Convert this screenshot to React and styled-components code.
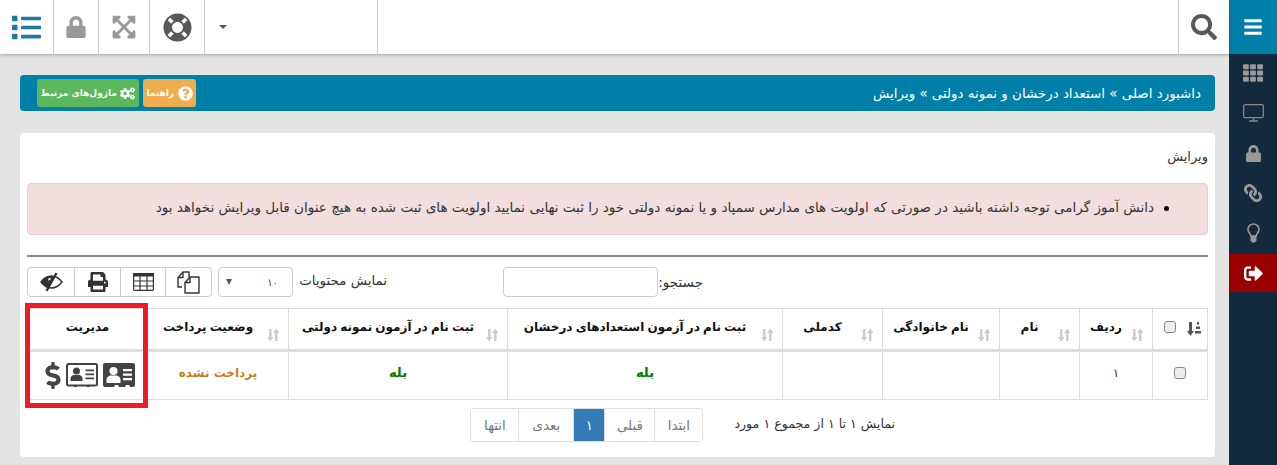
import styled, { createGlobalStyle } from 'styled-components';
import {
  FaBars, FaCogs, FaDollarSign, FaExpandArrowsAlt, FaLifeRing, FaLink, FaList, FaLock,
  FaPrint, FaQuestionCircle, FaSearch, FaSignOutAlt, FaTh,
} from 'react-icons/fa';

const GlobalStyle = createGlobalStyle`
  html, body {
    margin: 0;
    padding: 0;
    height: 100%;
    overflow: hidden;
    background: #e4e4e4;
  }
  body {
    font-family: "DejaVu Sans", sans-serif;
    font-size: 13px;
    color: #333;
  }
`;

const Page = styled.div`
  display: flex;
  direction: rtl;
  height: 465px;
`;

const Sidebar = styled.aside`
  width: 48px;
  flex: none;
  background: #13293d;
  display: flex;
  flex-direction: column;
`;

const SideTop = styled.div`
  height: 54px;
  background: #007fa9;
  color: #fff;
  display: flex;
  align-items: center;
  justify-content: center;
  font-size: 20px;
`;

const SideItem = styled.div`
  height: ${({ $h }) => $h || 40}px;
  display: flex;
  align-items: center;
  justify-content: center;
  font-size: ${({ $size }) => $size || 20}px;
  color: ${({ $active }) => ($active ? '#fff' : '#999')};
  background: ${({ $active }) => ($active ? '#990000' : 'transparent')};
`;

const ChainIcon = styled(FaLink)`
  transform: scaleX(-1);
`;

const Main = styled.div`
  flex: 1;
  min-width: 0;
  display: flex;
  flex-direction: column;
`;

const Topbar = styled.header`
  height: 54px;
  flex: none;
  background: #fff;
  box-shadow: 0 1px 3px rgba(0, 0, 0, 0.3);
  display: flex;
`;

const TopCell = styled.div`
  width: ${({ $w }) => $w}px;
  flex: none;
  display: flex;
  align-items: center;
  justify-content: center;
  font-size: ${({ $size }) => $size || 24}px;
  color: ${({ $color }) => $color || '#595959'};
  border-left: ${({ $noLine }) => ($noLine ? 'none' : '1px solid #ccc')};
  box-sizing: border-box;
`;

const Spacer = styled.div`
  flex: 1;
  border-left: 1px solid #ccc;
`;

const DropCell = styled(TopCell)`
  justify-content: flex-end;
  padding-left: 14px;
`;

const Caret = styled.span`
  width: 0;
  height: 0;
  border-left: 4px solid transparent;
  border-right: 4px solid transparent;
  border-top: 4px solid #555;
`;

const Content = styled.main`
  padding: 21px 14px 0 20px;
  display: flex;
  flex-direction: column;
  gap: 22px;
`;

const Breadcrumb = styled.div`
  height: 36px;
  background: #007fa9;
  border-radius: 4px;
  color: #fff;
  display: flex;
  align-items: center;
  justify-content: space-between;
  padding: 0 14px 0 17px;
  font-size: 13.4px;
`;

const BreadActions = styled.div`
  display: flex;
  gap: 4px;
`;

const ActionButton = styled.span`
  height: 28px;
  box-sizing: border-box;
  padding: 0 3.5px;
  border-radius: 3px;
  background: ${({ $bg }) => $bg};
  color: #fff;
  font-size: 9px;
  font-weight: bold;
  display: flex;
  align-items: center;
  gap: 3.5px;
  svg {
    font-size: 15px;
  }
`;

const Card = styled.section`
  height: 324px;
  box-sizing: border-box;
  background: #fff;
  border-radius: 4px;
  padding: 15px 7px 0;
  display: flex;
  flex-direction: column;
`;

const CardTitle = styled.div`
  height: 20px;
  line-height: 18px;
  font-size: 13px;
`;

const Alert = styled.div`
  margin-top: 15px;
  height: 52px;
  box-sizing: border-box;
  background: #f2dede;
  border: 1px solid #ebccd1;
  border-radius: 4px;
  display: flex;
  align-items: center;
  padding: 0 38px 4px 0;
  gap: 10px;
  font-size: 13.5px;
`;

const Dot = styled.span`
  width: 5px;
  height: 5px;
  border-radius: 50%;
  background: #000;
  flex: none;
  margin-top: 3px;
`;

const Rule = styled.hr`
  margin: 20px 0 0;
  border: 0;
  height: 2px;
  background: #888;
`;

const ControlRow = styled.div`
  margin-top: 10px;
  height: 30px;
  display: flex;
  padding-right: 505px;
`;

const FieldLabel = styled.label`
  display: flex;
  align-items: center;
  font-size: 13.5px;
`;

const SearchBox = styled.input`
  width: 155px;
  height: 30px;
  box-sizing: border-box;
  border: 1px solid #ccc;
  border-radius: 4px;
  background: #fff;
  outline: none;
`;

const LengthGroup = styled.div`
  margin-right: auto;
  display: flex;
  align-items: center;
  gap: 6px;
`;

const LengthLabel = styled.span`
  padding-bottom: 4px;
  font-size: 13.4px;
  width: 88px;
  white-space: nowrap;
`;

const SelectWrap = styled.div`
  position: relative;
  width: 75px;
  height: 30px;
`;

const LengthSelect = styled.select`
  appearance: none;
  width: 100%;
  height: 100%;
  box-sizing: border-box;
  border: 1px solid #ccc;
  border-radius: 4px;
  background: #fff;
  font-family: inherit;
  font-size: 10px;
  color: #444;
  padding: 0 14px;
`;

const SelectCaret = styled.span`
  position: absolute;
  left: 8px;
  top: 12px;
  width: 0;
  height: 0;
  border-left: 3px solid transparent;
  border-right: 3px solid transparent;
  border-top: 6px solid #555;
`;

const ToolGroup = styled.div`
  display: flex;
  border: 1px solid #ccc;
  border-radius: 4px;
  height: 30px;
  box-sizing: border-box;
`;

const ToolButton = styled.span`
  width: ${({ $w }) => $w}px;
  box-sizing: border-box;
  display: flex;
  align-items: center;
  justify-content: center;
  font-size: 20px;
  color: #333;
  border-left: ${({ $last }) => ($last ? 'none' : '1px solid #ccc')};
`;

const TableWrap = styled.div`
  position: relative;
  margin-top: 11px;
`;

const HighlightBox = styled.div`
  position: absolute;
  left: -2px;
  top: -5px;
  width: 123px;
  height: 105px;
  box-sizing: border-box;
  border: 5px solid #ed1c24;
`;

const Table = styled.table`
  table-layout: fixed;
  width: 100%;
  border-collapse: collapse;
  margin: 0;
`;

const Th = styled.th`
  position: relative;
  height: 42px;
  padding: 0 ${({ $plain }) => ($plain ? 0 : 20)}px 5px 0;
  box-sizing: border-box;
  border: 1px solid #ddd;
  border-bottom: 3px solid #ddd;
  font-size: 12px;
  font-weight: bold;
  color: #111;
  text-align: center;
  word-spacing: -1px;
`;

const SortIcon = styled.svg`
  position: absolute;
  right: 8px;
  top: 19px;
  width: 14px;
  height: 14px;
  color: #ccc;
`;

const Td = styled.td`
  height: 49px;
  padding: 0 0 6px;
  box-sizing: border-box;
  border: 1px solid #ddd;
  text-align: center;
  font-size: ${({ $size }) => $size || 12}px;
  font-weight: ${({ $bold }) => ($bold ? 'bold' : 'normal')};
  color: ${({ $color }) => $color || '#333'};
`;

const Check = styled.input`
  appearance: none;
  margin: 0;
  width: 12px;
  height: 12px;
  background: #eee;
  border: 1px solid #888;
  border-radius: 3px;
  vertical-align: middle;
`;

const HeadCheck = styled.span`
  display: flex;
  align-items: center;
  justify-content: flex-end;
  gap: 11px;
  padding-right: 6px;
  direction: ltr;
`;

const SortedIcon = styled.svg`
  width: 14px;
  height: 15px;
  color: #555;
  margin-top: 4px;
`;

const Actions = styled.div`
  display: flex;
  align-items: center;
  gap: 5px;
  padding: 5px 12px 0 0;
  color: #444;
`;

const CardSvg = styled.svg`
  width: 32px;
  height: 24px;
  flex: none;
`;

const Dollar = styled(FaDollarSign)`
  width: 16px;
  height: 27px;
  flex: none;
`;

const Footer = styled.div`
  margin-top: 8px;
  display: flex;
  align-items: center;
  padding-right: 313px;
  gap: 31px;
`;

const Info = styled.span`
  font-size: 12.6px;
  padding-bottom: 4px;
`;

const Pager = styled.nav`
  display: flex;
  height: 34px;
  box-sizing: border-box;
  border: 1px solid #ddd;
  border-radius: 4px;
  overflow: hidden;
`;

const PageItem = styled.span`
  width: ${({ $w }) => $w}px;
  display: flex;
  align-items: center;
  justify-content: center;
  font-size: 13.4px;
  box-sizing: border-box;
  color: ${({ $active }) => ($active ? '#fff' : '#777')};
  background: ${({ $active }) => ($active ? '#337ab7' : '#fff')};
  border-left: ${({ $last }) => ($last ? 'none' : '1px solid #ddd')};
`;

const Sort = () => (
  <SortIcon viewBox="0 0 14 14" fill="currentColor">
    <path d="M3 1h2.500v8h2L4.250 13.500 1 9h2zM9 13V5H7L10.250.5 13.500 5h-2v8z" />
  </SortIcon>
);

const SortedDown = () => (
  <SortedIcon viewBox="0 0 14 15" fill="currentColor">
    <path d="M2 1h3v9h2l-3.500 5L0 10h2zM10 1h2v2.500h-2zM9 5.500h4V8H9zM8 10h6v2.500H8z" />
  </SortedIcon>
);

const IdCardSolid = () => (
  <CardSvg viewBox="0 0 32 24">
    <path fill="#444" d="M2 0h28a2 2 0 0 1 2 2v20a2 2 0 0 1-2 2h-3l-1-2h-3l-1 2h-6l-1-2h-3l-1 2H2a2 2 0 0 1-2-2V2a2 2 0 0 1 2-2z" />
    <circle fill="#fff" cx="10.500" cy="8" r="4" />
    <path fill="#fff" d="M3.500 20v-3c0-3 2.500-4.500 4.500-4.500h5c2 0 4.500 1.500 4.500 4.500v3z" />
    <path fill="#fff" d="M20 6h9v2.200h-9zM20 10.500h9v2.200h-9zM20 15h9v2.200h-9z" />
  </CardSvg>
);

const IdCardOutline = () => (
  <CardSvg viewBox="0 0 32 24">
    <rect x="1" y="1" width="30" height="21.500" rx="1.500" fill="none" stroke="#444" strokeWidth="2" />
    <path fill="#444" d="M8 22h3v2H8zM21 22h3v2h-3z" />
    <circle fill="#444" cx="10.500" cy="8" r="3.500" />
    <path fill="#444" d="M4.500 18v-2.500c0-2 2-3.500 3.500-3.500h5c1.500 0 3.500 1.500 3.500 3.500V18z" />
    <path fill="#444" d="M19.500 6.500H28v1.800h-8.500zM19.500 10.500H28v1.800h-8.500zM19.500 14.500H28v1.800h-8.500z" />
  </CardSvg>
);

const FilesIcon = () => (
  <svg width="23" height="23" viewBox="0 0 23 23" fill="none" stroke="#333" strokeWidth="1.400" strokeLinejoin="round">
    <path fill="#fff" d="M5 16H1V6.500L6 1h6v5" />
    <path d="M6 1v5.500H1" />
    <path fill="#fff" d="M8 22V11.500L13 6h9v16z" />
    <path d="M13 6v5.500H8" />
  </svg>
);

const GridIcon = () => (
  <svg width="21" height="18" viewBox="0 0 21 18" fill="none" stroke="#333" strokeWidth="1.200">
    <rect x="0.600" y="0.600" width="19.800" height="16.800" rx="1" />
    <path fill="#333" stroke="none" d="M0 0h21v3.500H0z" />
    <path d="M7 3v14M14 3v14M1 8h19M1 13h19" />
  </svg>
);

const EyeSlashIcon = () => (
  <svg width="23" height="20" viewBox="0 0 23 20">
    <path fill="none" stroke="#333" strokeWidth="1.400" d="M1 10c3-4 6.500-6 10.500-6s7.500 2 10.500 6c-3 4-6.500 6-10.500 6S4 14 1 10z" />
    <path fill="#333" d="M1 10c2.500-3.500 6-6 10.500-6 1 0 1.500 0 2.500.5L9 15.500C6 15 3 13 1 10z" />
    <path fill="#333" d="M15.500.5l2 1L7.500 19.500l-2-1z" />
    <path fill="#fff" d="M8.500 6.500a2 2 0 0 1 2.500 0l-1 1.500a2 2 0 0 0-2 1z" />
  </svg>
);

const MonitorIcon = () => (
  <svg width="21" height="18" viewBox="0 0 21 18" fill="none" stroke="#888" strokeWidth="1.300">
    <rect x="0.700" y="0.700" width="19.600" height="13" rx="1.500" />
    <path d="M10.500 14v2.500M6 17h9" />
  </svg>
);

const BulbIcon = () => (
  <svg width="13" height="20" viewBox="0 0 13 20">
    <path fill="none" stroke="#999" strokeWidth="1.600" d="M4 13c0-2-3-3.500-3-6.500a5.500 5.500 0 0 1 11 0c0 3-3 4.500-3 6.500z" />
    <path fill="#999" d="M3.500 13h6v4.500l-1.500 2H5l-1.500-2z" />
  </svg>
);

const columns = [
  { title: 'ردیف', w: 73 },
  { title: 'نام', w: 80 },
  { title: 'نام خانوادگی', w: 117 },
  { title: 'کدملی', w: 100 },
  { title: 'ثبت نام در آزمون استعدادهای درخشان', w: 275 },
  { title: 'ثبت نام در آزمون نمونه دولتی', w: 219 },
  { title: 'وضعیت پرداخت', w: 141 },
];

export default function App() {
  return (
    <>
      <GlobalStyle />
      <Page>
        <Sidebar>
          <SideTop><FaBars /></SideTop>
          <SideItem $h={38}><FaTh /></SideItem>
          <SideItem $h={41}><MonitorIcon /></SideItem>
          <SideItem $h={40} $size={17}><FaLock /></SideItem>
          <SideItem $h={39} $size={18}><ChainIcon /></SideItem>
          <SideItem $h={42}><BulbIcon /></SideItem>
          <SideItem $h={38} $active $size={19}><FaSignOutAlt /></SideItem>
        </Sidebar>
        <Main>
          <Topbar>
            <TopCell $w={51} $size={26}><FaSearch /></TopCell>
            <Spacer />
            <DropCell $w={173}><Caret /></DropCell>
            <TopCell $w={55} $size={29}><FaLifeRing /></TopCell>
            <TopCell $w={51} $color="#999" $size={26}><FaExpandArrowsAlt /></TopCell>
            <TopCell $w={45} $color="#999" $size={22}><FaLock /></TopCell>
            <TopCell $w={53} $color="#1f77a5" $size={29} $noLine><FaList /></TopCell>
          </Topbar>
          <Content>
            <Breadcrumb>
              <span>داشبورد اصلی » استعداد درخشان و نمونه دولتی » ویرایش</span>
              <BreadActions>
                <ActionButton $bg="#f0ad4e"><FaQuestionCircle />راهنما</ActionButton>
                <ActionButton $bg="#5cb85c"><FaCogs />ماژول‌های مرتبط</ActionButton>
              </BreadActions>
            </Breadcrumb>
            <Card>
              <CardTitle>ویرایش</CardTitle>
              <Alert>
                <Dot />
                دانش آموز گرامی توجه داشته باشید در صورتی که اولویت های مدارس سمپاد و یا نمونه دولتی خود را ثبت نهایی نمایید اولویت های ثبت شده به هیچ عنوان قابل ویرایش نخواهد بود
              </Alert>
              <Rule />
              <ControlRow>
                <FieldLabel>جستجو:<SearchBox /></FieldLabel>
                <LengthGroup>
                  <LengthLabel>نمایش محتویات</LengthLabel>
                  <SelectWrap>
                    <LengthSelect defaultValue="10">
                      <option value="10">۱۰</option>
                    </LengthSelect>
                    <SelectCaret />
                  </SelectWrap>
                  <ToolGroup>
                    <ToolButton $w={46}><FilesIcon /></ToolButton>
                    <ToolButton $w={45}><GridIcon /></ToolButton>
                    <ToolButton $w={46}><FaPrint /></ToolButton>
                    <ToolButton $w={46} $last><EyeSlashIcon /></ToolButton>
                  </ToolGroup>
                </LengthGroup>
              </ControlRow>
              <TableWrap>
                <Table>
                  <colgroup>
                    <col style={{ width: 55 }} />
                    {columns.map((c) => <col key={c.title} style={{ width: c.w }} />)}
                    <col />
                  </colgroup>
                  <thead>
                    <tr>
                      <Th $plain>
                        <HeadCheck><Check type="checkbox" /><SortedDown /></HeadCheck>
                      </Th>
                      {columns.map((c) => <Th key={c.title}>{c.title}<Sort /></Th>)}
                      <Th $plain>مدیریت</Th>
                    </tr>
                  </thead>
                  <tbody>
                    <tr>
                      <Td><Check type="checkbox" /></Td>
                      <Td>۱</Td>
                      <Td />
                      <Td />
                      <Td />
                      <Td $bold $size={13} $color="#008000">بله</Td>
                      <Td $bold $size={13} $color="#008000">بله</Td>
                      <Td $bold $color="#c8801e">پرداخت نشده</Td>
                      <Td>
                        <Actions>
                          <IdCardSolid />
                          <IdCardOutline />
                          <Dollar />
                        </Actions>
                      </Td>
                    </tr>
                  </tbody>
                </Table>
                <HighlightBox />
              </TableWrap>
              <Footer>
                <Info>نمایش ۱ تا ۱ از مجموع ۱ مورد</Info>
                <Pager>
                  <PageItem $w={48}>ابتدا</PageItem>
                  <PageItem $w={50}>قبلی</PageItem>
                  <PageItem $w={31} $active>۱</PageItem>
                  <PageItem $w={55}>بعدی</PageItem>
                  <PageItem $w={47} $last>انتها</PageItem>
                </Pager>
              </Footer>
            </Card>
          </Content>
        </Main>
      </Page>
    </>
  );
}
